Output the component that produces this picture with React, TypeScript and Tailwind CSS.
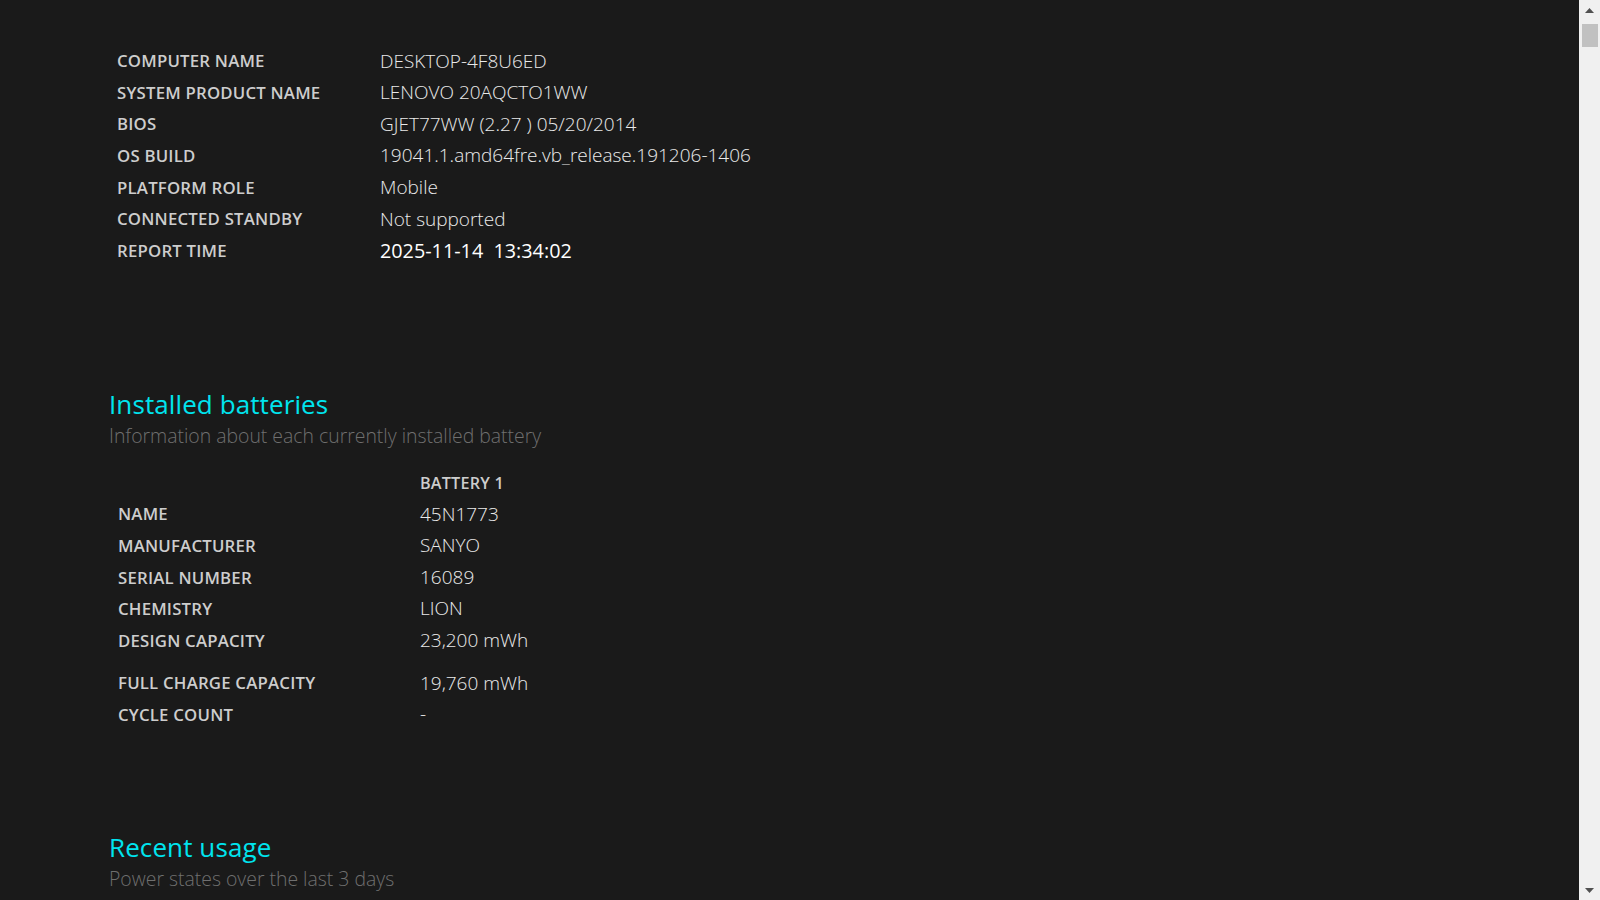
const systemInfo = [
  { label: 'COMPUTER NAME', value: 'DESKTOP-4F8U6ED' },
  { label: 'SYSTEM PRODUCT NAME', value: 'LENOVO 20AQCTO1WW' },
  { label: 'BIOS', value: 'GJET77WW (2.27 ) 05/20/2014' },
  { label: 'OS BUILD', value: '19041.1.amd64fre.vb_release.191206-1406' },
  { label: 'PLATFORM ROLE', value: 'Mobile' },
  { label: 'CONNECTED STANDBY', value: 'Not supported' },
]

const batteryInfo = [
  { label: 'NAME', value: '45N1773', tall: false },
  { label: 'MANUFACTURER', value: 'SANYO', tall: false },
  { label: 'SERIAL NUMBER', value: '16089', tall: false },
  { label: 'CHEMISTRY', value: 'LION', tall: false },
  { label: 'DESIGN CAPACITY', value: '23,200 mWh', tall: false },
  { label: 'FULL CHARGE CAPACITY', value: '19,760 mWh', tall: true },
  { label: 'CYCLE COUNT', value: '-', tall: false },
]

function SectionHeader({ title, subtitle }: { title: string; subtitle: string }) {
  return (
    <div className="pl-[109px]">
      <h2 className="h-[36px] flex items-center text-[26px] text-[#00e4ee] font-normal tracking-[0.1px]">{title}</h2>
      <p className="h-[26px] flex items-center text-[19.4px] font-light text-[#6f6f6f]">{subtitle}</p>
    </div>
  )
}

function Scrollbar() {
  return (
    <div className="w-[21px] h-full bg-[#f0f0f0] flex flex-col items-center shrink-0">
      <div className="h-[20px] w-full flex items-center justify-center">
        <svg width="9" height="5" viewBox="0 0 9 5"><path d="M4.5 0 L9 5 L0 5 Z" fill="#505050" /></svg>
      </div>
      <div className="mt-[4px] w-[16px] h-[23px] bg-[#c1c1c1]" />
      <div className="flex-1" />
      <div className="h-[20px] w-full flex items-center justify-center">
        <svg width="9" height="5" viewBox="0 0 9 5"><path d="M0 0 L9 0 L4.5 5 Z" fill="#505050" /></svg>
      </div>
    </div>
  )
}

export default function App() {
  return (
    <div className="w-[1600px] h-[900px] flex bg-[#1a1a1a] overflow-hidden" style={{ fontFamily: '"Open Sans", "Noto Sans", sans-serif' }}>
      <div className="flex-1 overflow-hidden pt-[45px]">
        <div className="pl-[117px]">
          {systemInfo.map((row) => (
            <div key={row.label} className="h-[31.6px] flex items-center">
              <span className="w-[263px] text-[16.8px] font-semibold text-[#cdcdcd] tracking-[0.2px]">{row.label}</span>
              <span className="text-[19px] font-light text-[#eaeaea]">{row.value}</span>
            </div>
          ))}
          <div className="h-[31.6px] flex items-center">
            <span className="w-[263px] text-[16.8px] font-semibold text-[#cdcdcd] tracking-[0.2px]">REPORT TIME</span>
            <span className="text-[19.8px] font-normal text-white">2025-11-14&nbsp;&nbsp;13:34:02</span>
          </div>
        </div>

        <div className="mt-[120px]">
          <SectionHeader title="Installed batteries" subtitle="Information about each currently installed battery" />
        </div>

        <div className="pl-[118px] mt-[20px]">
          <div className="h-[30px] flex items-center">
            <span className="w-[302px]" />
            <span className="text-[16.2px] font-semibold text-[#cdcdcd] tracking-[0.2px]">BATTERY 1</span>
          </div>
          {batteryInfo.map((row) => (
            <div key={row.label} className={`${row.tall ? 'h-[42.6px] pt-[11px]' : 'h-[31.6px]'} flex items-center`}>
              <span className="w-[302px] text-[16.8px] font-semibold text-[#cdcdcd] tracking-[0.2px]">{row.label}</span>
              <span className="text-[19px] font-light text-[#eaeaea]">{row.value}</span>
            </div>
          ))}
        </div>

        <div className="mt-[99px]">
          <SectionHeader title="Recent usage" subtitle="Power states over the last 3 days" />
        </div>
      </div>
      <Scrollbar />
    </div>
  )
}
